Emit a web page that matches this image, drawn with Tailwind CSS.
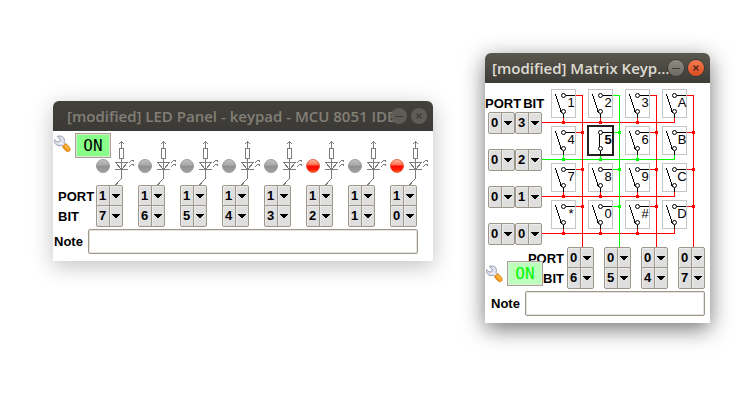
<!DOCTYPE html>
<html lang="en">
<head>
<meta charset="utf-8">
<title>MCU 8051 IDE - virtual hardware</title>
<script src="https://cdn.jsdelivr.net/npm/@tailwindcss/browser@4"></script>
</head>
<body class="bg-white font-['Liberation_Sans',Arial,sans-serif] text-[13px] font-bold text-black">

<svg class="absolute size-0" aria-hidden="true">
  <defs>
    <linearGradient id="off" x1="0" y1="0" x2="0" y2="1"><stop offset="0" stop-color="#c4c4c4"/><stop offset=".45" stop-color="#a6a6a6"/><stop offset=".5" stop-color="#8e8e8e"/><stop offset="1" stop-color="#a4a4a4"/></linearGradient>
    <linearGradient id="lit" x1="0" y1="0" x2="0" y2="1"><stop offset="0" stop-color="#ffc0a8"/><stop offset=".42" stop-color="#ff6a48"/><stop offset=".5" stop-color="#fa0800"/><stop offset=".8" stop-color="#ff1c00"/><stop offset="1" stop-color="#ff7a30"/></linearGradient>
    <linearGradient id="handle" x1="0" y1="1" x2="1" y2="0"><stop offset="0" stop-color="#e07800"/><stop offset=".6" stop-color="#ffa820"/><stop offset="1" stop-color="#e88a10"/></linearGradient>
  </defs>
  <symbol id="wrench" viewBox="0 0 17 18">
    <path d="M3.2 1.4C5.5.4 8.600 1 9.900 3.200c.8 1.500.7 3 .3 4.300l1.600 1.700-2.600 2.600-1.700-1.600C5 11.200 2.300 10.500 1 8.300.3 7 .2 5.700.6 4.600L3 7l2.600-.3L6.200 4z" fill="#dfe1ec" stroke="#9296ae" stroke-width=".9" stroke-linejoin="round"/>
    <path d="M5.200 8.400 7.600 8l2.400 2.300" fill="none" stroke="#fff" stroke-width="1"/>
    <path d="M8.700 11.200 11.200 8.700c1.700.3 3.600 2.500 4.600 4.300.9 1.700.2 3.200-1 3.600-1.700.5-3.200-.9-4.300-2.200-.9-1-1.700-2-1.800-3.200z" fill="url(#handle)" stroke="#c87412" stroke-width=".7"/>
    <path d="M10.800 10.400c1.500 1 2.700 2.500 3.500 4" fill="none" stroke="#ffd070" stroke-width="1"/>
  </symbol>
  <symbol id="diode" viewBox="0 0 42 54">
    <g fill="none" stroke="#7c7c7c" shape-rendering="crispEdges">
      <path d="M25.500 10v7M23.500 17.500h4v10h-4zM25.500 28v20M19 31.500h13M19 38.500h13M23 12.500h1M24 11.500h3M27 12.500h1"/>
      <path d="M19.500 31.500l6 7 6-7M25.500 47.500l-6 6.500"/>
      <path d="M33 31.500h1M34 30.500h1M35 29.500h3M37 30.500h1M33 35.500h1M34 34.500h1M35 33.500h3M37 34.500h1"/>
    </g>
  </symbol>
</svg>

<main class="grid grid-cols-[minmax(0,380fr)_minmax(0,225fr)] items-start gap-x-[52px] pt-[53px] pr-[39px] pb-10 pl-[53px]">

  <section aria-label="LED Panel" class="mt-12 rounded-t-md bg-white shadow-[0_5px_22px_rgba(0,0,0,0.25)]">
    <header class="flex h-[30px] items-center rounded-t-md bg-linear-to-b from-[#43413c] to-[#3b3a36] pr-1.5 pl-3.5">
      <h1 class="min-w-0 flex-1 font-['Open_Sans','Noto_Sans',sans-serif] text-[15px] leading-5 font-semibold whitespace-nowrap text-[#837f76]">[modified] LED Panel - keypad - MCU 8051 IDE</h1>
      <div class="relative flex gap-1">
        <button aria-label="Minimize" class="size-4 rounded-full bg-[#5f5c55]"><svg viewBox="0 0 16 16" class="size-4" stroke="#3c3b37"><path d="M4 8.500h8"/></svg></button>
        <button aria-label="Close" class="size-4 rounded-full bg-[#5f5c55]"><svg viewBox="0 0 16 16" class="size-4" stroke="#3c3b37" stroke-width="1.200"><path d="M5.500 5.500l5 5M10.500 5.500l-5 5"/></svg></button>
      </div>
    </header>
    <div class="relative pb-[7px]">
      <div class="absolute top-0.5 left-px flex gap-1">
        <button aria-label="Configure" class="h-[22px] w-[17px]"><svg class="h-[18px] w-[17px]"><use href="#wrench"/></svg></button>
        <button class="h-[25px] w-9 border border-[#a9a196] bg-[#88ff88] font-['DejaVu_Sans_Mono',monospace] text-[16px] leading-[22px] font-normal shadow-[inset_0_0_0_1px_#d8e8d0]">ON</button>
      </div>
      <div class="flex pr-px">
        <div class="w-[43px] pt-14 pl-[5px] leading-5"><div>PORT</div><div>BIT</div></div>
        <div id="leds" class="grid flex-1 grid-cols-8"></div>
      </div>
      <div class="mt-0.5 flex items-center pr-[15px] pl-px">
        <label for="led-note" class="w-[34px]">Note</label>
        <input id="led-note" class="h-[25px] min-w-0 flex-1 rounded-[2px] border border-[#9e978c] bg-white px-1 font-normal shadow-[inset_0_0_0_1px_#e6e3de]">
      </div>
    </div>
  </section>

  <section aria-label="Matrix Keypad" class="rounded-t-md bg-white shadow-[0_6px_22px_rgba(0,0,0,0.55)]">
    <header class="flex h-[30px] items-center rounded-t-md bg-linear-to-b from-[#5a574e] to-[#3d3c37] pr-1.5 pl-[7px]">
      <h1 class="min-w-0 flex-1 font-['Open_Sans','Noto_Sans',sans-serif] text-[15px] leading-5 font-semibold whitespace-nowrap text-[#dfdbd2]">[modified] Matrix Keyp…</h1>
      <div class="relative flex gap-1">
        <button aria-label="Minimize" class="size-4 rounded-full bg-linear-to-b from-[#8e8b82] to-[#6b6961] ring-1 ring-[#3a3833]"><svg viewBox="0 0 16 16" class="size-4" stroke="#3c3b37"><path d="M4 8.500h8"/></svg></button>
        <button aria-label="Close" class="size-4 rounded-full bg-linear-to-b from-[#f47a52] to-[#dd4a1c] ring-1 ring-[#3a3833]"><svg viewBox="0 0 16 16" class="size-4" stroke="#4a2413" stroke-width="1.200"><path d="M5.500 5.500l5 5M10.500 5.500l-5 5"/></svg></button>
      </div>
    </header>
    <div class="pb-[7px]">
      <div class="flex">
        <div class="w-[57px]">
          <div class="flex h-[29px] items-end gap-0.5 leading-4"><span>PORT</span><span>BIT</span></div>
          <div id="rows" class="flex flex-col gap-[15px] pl-[3px]"></div>
        </div>
        <div class="relative">
          <svg id="wires" class="absolute top-0 left-0 h-[164px] w-[168px]" shape-rendering="crispEdges"></svg>
          <div id="keys" class="relative grid h-[164px] grid-cols-[repeat(4,25px)] content-start gap-x-3 gap-y-2 pt-1.5 pl-[9px]"></div>
        </div>
      </div>
      <div class="relative flex">
        <div class="w-[82px] pt-0.5 pr-[3px] text-right leading-5"><div>PORT</div><div>BIT</div></div>
        <div id="cols" class="flex gap-2.5"></div>
        <div class="absolute top-3.5 left-px flex items-center gap-1">
          <button aria-label="Configure" class="h-[18px] w-[17px]"><svg class="h-[18px] w-[17px]"><use href="#wrench"/></svg></button>
          <button class="h-[25px] w-9 border border-[#a9a196] bg-[#bbffbb] font-['DejaVu_Sans_Mono',monospace] text-[16px] leading-[22px] font-normal text-[#00f800] shadow-[inset_0_0_0_1px_#dceedc]">ON</button>
        </div>
      </div>
      <div class="mt-0.5 flex items-center pr-[5px] pl-1.5">
        <label for="key-note" class="w-[34px]">Note</label>
        <input id="key-note" class="h-[25px] min-w-0 flex-1 rounded-[2px] border border-[#9e978c] bg-white px-1 font-normal shadow-[inset_0_0_0_1px_#e6e3de]">
      </div>
    </div>
  </section>
</main>

<script>
const picker = (value, label, extra = '') => `
  <span class="relative block h-[22px] w-[27px] ${extra}">
    <select aria-label="${label}" class="block h-[22px] w-[27px] appearance-none rounded-[2px] border border-[#9e978c] bg-[#dfdfdf] pl-[2px] leading-5 shadow-[inset_1px_1px_0_#ececec]">
      ${[0,1,2,3,4,5,6,7].map(n => `<option${n === value ? ' selected' : ''}>${n}</option>`).join('')}
    </select>
    <svg class="pointer-events-none absolute top-0 left-[13px] h-[22px] w-[14px]" shape-rendering="crispEdges"><path d="M.5 1v20" stroke="#9e978c"/><path d="M1.500 1v20" stroke="#ececec"/><path d="M3 9h8v1h-1v1h-1v1h-1v1h-2v-1h-1v-1h-1v-1h-1z"/></svg>
  </span>`;

const lit = [2, 0];
document.getElementById('leds').innerHTML = [7,6,5,4,3,2,1,0].map(bit => `
  <div>
    <svg class="block h-[54px] w-[42px]">
      <use href="#diode"/>
      <circle cx="7" cy="35" r="6.500" fill="url(#${lit.includes(bit) ? 'lit' : 'off'})" stroke="${lit.includes(bit) ? '#dd4a28' : '#8c8c8c'}" stroke-width=".8"/>
    </svg>
    ${picker(1, 'LED ' + bit + ' port')}${picker(bit, 'LED ' + bit + ' bit', '-mt-0.5')}
  </div>`).join('');

document.getElementById('rows').innerHTML = [3,2,1,0].map((bit, r) =>
  `<div class="flex">${picker(0, 'Row ' + r + ' port')}${picker(bit, 'Row ' + r + ' bit')}</div>`).join('');

document.getElementById('cols').innerHTML = [6,5,4,7].map((bit, c) =>
  `<div>${picker(0, 'Column ' + c + ' port')}${picker(bit, 'Column ' + c + ' bit', '-mt-0.5')}</div>`).join('');

const red = '#ff0000', green = '#00ff00';
let wires = '';
for (let r = 0; r < 4; r++) {
  const y = 39 + 37 * r, color = r === 1 ? green : red;
  wires += `<path d="M0 ${y}.5H133" stroke="${color}"/>`;
  for (let c = 0; c < 4; c++) {
    const x = 21 + 37 * c;
    wires += `<path d="M${x}.5 ${y - 4}V${y + 1}" stroke="${color}"/>`;
    if (c < 3) wires += `<path d="M${x - 1} ${y - 1}h3v3h-3z" fill="${color}"/>`;
  }
}
for (let c = 0; c < 4; c++) {
  const x = 40 + 37 * c, color = c === 1 ? green : red;
  wires += `<path d="M${x}.5 12V164" stroke="${color}"/>`;
  for (let r = 0; r < 4; r++) {
    const y = 12 + 37 * r;
    wires += `<path d="M${x - 6} ${y}.5H${x + 1}" stroke="${color}"/>`;
    if (r) wires += `<path d="M${x - 1} ${y - 1}h3v3h-3z" fill="${color}"/>`;
  }
}
document.getElementById('wires').innerHTML = wires;

document.getElementById('keys').innerHTML = [...'123A456B789C*0#D'].map(key => {
  const down = key === '5';
  return `<button aria-pressed="${down}" class="relative h-[29px] w-[25px] ${down ? 'font-bold outline-2 -outline-offset-1 outline-[#222]' : 'font-normal outline-1 -outline-offset-1 outline-[#c6c6c6]'}">
    <svg class="absolute inset-0 h-[29px] w-[25px]" fill="none" stroke="#000">
      <path d="M15 6.500h9M12.500 25v4" shape-rendering="crispEdges"/>
      <path d="${down ? 'M11.500 6v17' : 'M4.500 5l6 19'}" shape-rendering="crispEdges"/>
      <circle cx="12.500" cy="6.500" r="2" fill="#fff"/><circle cx="12.500" cy="22.500" r="2" fill="#fff"/>
    </svg>
    <span class="absolute top-1.5 left-3.5 w-3 text-center leading-4"><span class="-mx-1 block">${key}</span></span>
  </button>`;
}).join('');
</script>
</body>
</html>
